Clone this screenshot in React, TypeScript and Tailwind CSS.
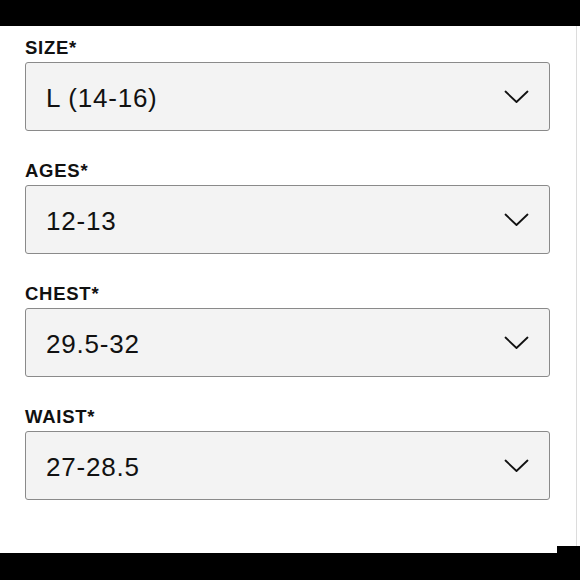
import React from 'react';

// Stacked size selectors, like a product-page size picker.

interface Field {
  label: string;
  value: string;
}

const FIELDS: Field[] = [
  { label: 'SIZE*', value: 'L (14-16)' },
  { label: 'AGES*', value: '12-13' },
  { label: 'CHEST*', value: '29.5-32' },
  { label: 'WAIST*', value: '27-28.5' },
];

function Chevron() {
  return (
    <svg width="25" height="14" viewBox="0 0 25 14" fill="none" className="shrink-0">
      <polyline points="1.5,1.5 12.5,12 23.5,1.5" stroke="#111" strokeWidth="1.8" strokeLinecap="round" strokeLinejoin="round" />
    </svg>
  );
}

export default function App() {
  return (
    <div
      className="w-[580px] h-[580px] flex flex-col bg-white overflow-hidden"
      style={{ fontFamily: '"Liberation Sans", Arial, sans-serif' }}
    >
      {/* Top bar */}
      <div className="h-[26px] bg-black shrink-0" />

      {/* Form */}
      <div className="flex-1 mr-[3px] border-r-[1.5px] border-[#dcdcdc] pl-[25px] pr-[26px] pt-[11px]">
        {FIELDS.map(({ label, value }, i) => (
          <div key={label} className={i === 0 ? '' : 'mt-[29px]'}>
            <div className="text-[18.5px] leading-[22px] font-bold text-[#111] mb-[3px] tracking-[0.04em]">
              {label}
            </div>
            <div className="h-[69px] rounded-[3px] border-[1.5px] border-[#8a8a8a] bg-[#f3f3f3] flex items-center justify-between pl-[20px] pr-[20px]">
              <span className="text-[26px] leading-none text-[#111] pt-[2px] tracking-[0.03em]">{value}</span>
              <Chevron />
            </div>
          </div>
        ))}
      </div>

      {/* Bottom bar */}
      <div className="relative h-[27px] bg-black shrink-0">
        <div className="absolute right-0 -top-[7px] w-[23px] h-[7px] bg-black" />
      </div>
    </div>
  );
}
